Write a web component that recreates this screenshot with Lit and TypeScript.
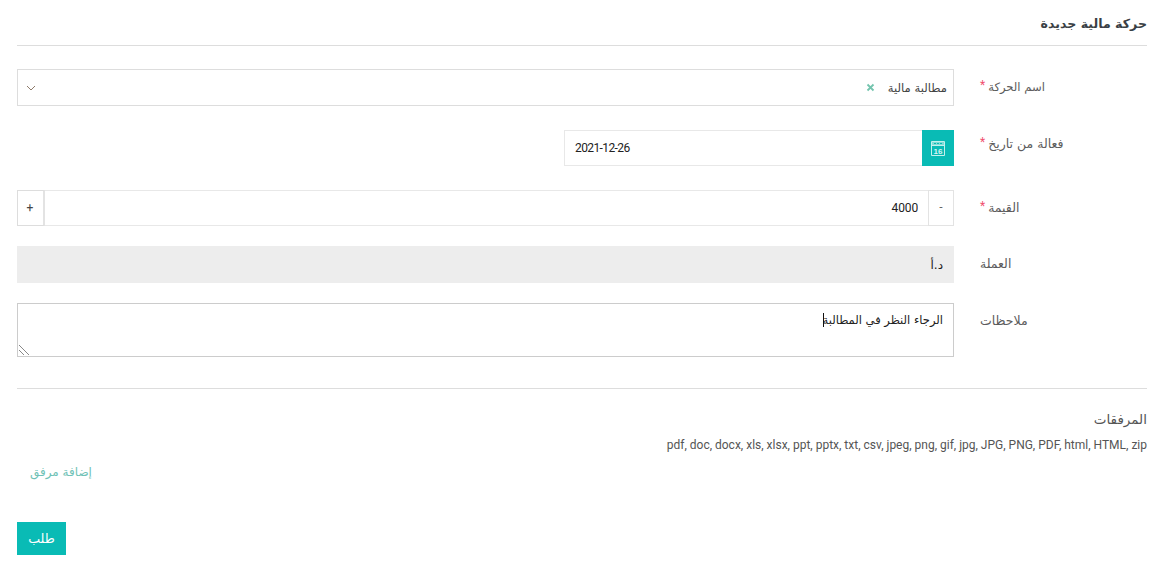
import { LitElement, html, css } from "lit";
import { customElement } from "lit/decorators.js";

@customElement("app-root")
export class AppRoot extends LitElement {
  static styles = css`
    :host {
      display: block;
      box-sizing: border-box;
      width: 1162px;
      height: 567px;
      padding: 0 15px 0 17px;
      background: #fff;
      overflow: hidden;
      font-family: "DejaVu Sans", sans-serif;
      font-size: 12px;
      color: #555;
      direction: rtl;
    }
    * { box-sizing: border-box; }
    .title {
      height: 46px;
      border-bottom: 1px solid #ddd;
      padding-top: 14px;
      font-size: 12.6px;
      line-height: 20px;
      font-weight: 700;
      color: #3a3f45;
    }
    .form { display: flex; flex-direction: column; padding-top: 23px; }
    .row {
      display: grid;
      grid-template-columns: 167px 937px;
      column-gap: 26px;
    }
    .label {
      direction: rtl;
      text-align: left;
      line-height: 20px;
      font-size: 12.5px;
      color: #5c5c5c;
    }
    .label.tight { font-size: 11.6px; }
    .pt-8 { padding-top: 8px; }
    .pt-4 { padding-top: 4px; }
    .label .star {
      color: #f0506e;
      font-family: "Roboto", sans-serif;
      font-size: 12px;
      margin-right: 3px;
      display: inline-block;
      vertical-align: 2px;
      line-height: 10px;
    }
    .m1 { margin-bottom: 24px; }
    .m2 { margin-bottom: 24px; }
    .m3 { margin-bottom: 20px; }
    .m4 { margin-bottom: 20px; }
    .select {
      height: 37px;
      border: 1px solid #ddd;
      display: flex;
      align-items: center;
      padding: 0 6px 0 8px;
      font-size: 11.6px;
      color: #444;
    }
    .select .x { margin-right: 13px; width: 9px; height: 9px; display: block; }
    .select .chev { margin-right: auto; width: 10px; height: 6px; display: block; }
    .date { display: flex; justify-content: flex-start; height: 36px; }
    .cal {
      width: 32px;
      background: #09bbb5;
      display: flex;
      align-items: center;
      justify-content: center;
    }
    .cal svg { width: 14px; height: 15px; display: block; }
    input {
      font: inherit;
      color: #222;
      border: 1px solid #e8e8e8;
      background: #fff;
      outline: none;
      padding: 0;
      margin: 0;
    }
    .date input {
      width: 358px;
      border-right: none;
      font-family: "Roboto", sans-serif;
      letter-spacing: -0.6px;
      direction: ltr;
      text-align: left;
      padding-left: 10px;
    }
    .num { display: flex; height: 36px; }
    .step {
      width: 26px;
      border: 1px solid #e3e3e3;
      display: flex;
      align-items: center;
      justify-content: center;
      font-family: "Roboto", sans-serif;
      font-weight: 300;
      color: #222;
    }
    .step.plus {
      width: 28px;
      border-width: 1px 2px 1px 1px;
      border-color: #ddd #e3e3e3 #ddd #ddd;
      padding-right: 1px;
      font-weight: 400;
      color: #444;
    }
    .num input {
      flex: 1;
      min-width: 0;
      border-width: 1px 0;
      font-family: "Roboto", sans-serif;
      letter-spacing: -0.15px;
      direction: rtl;
      padding-right: 10px;
    }
    .cur {
      height: 37px;
      background: #ededed;
      display: flex;
      align-items: center;
      padding-right: 11px;
      color: #222;
    }
    .note { position: relative; height: 54px; }
    textarea {
      display: block;
      width: 937px;
      height: 54px;
      font: inherit;
      font-size: 11.5px;
      line-height: 20px;
      color: #222;
      border: 1px solid #ccc;
      outline: none;
      padding: 6px 10px;
      margin: 0;
      direction: rtl;
      background: #fff;
      resize: none;
    }
    .caret {
      position: absolute;
      left: 806px;
      top: 10px;
      width: 1px;
      height: 14px;
      background: #111;
    }
    .grip {
      position: absolute;
      left: 1px;
      bottom: 1px;
      width: 12px;
      height: 12px;
      display: block;
    }
    .sep { border: 0; border-top: 1px solid #ddd; margin: 31px 0 0; }
    .att { padding-top: 20px; }
    .att-title { line-height: 20px; font-size: 13.5px; color: #555; }
    .types {
      margin-top: 6px;
      direction: ltr;
      text-align: right;
      font-family: "Roboto", sans-serif;
      font-size: 12px;
      line-height: 20px;
      color: #555;
    }
    .add-wrap { margin-top: 7px; text-align: left; padding-left: 13px; }
    .add { color: #6fc2b6; line-height: 20px; text-decoration: none; }
    .actions { margin-top: 40px; display: flex; justify-content: flex-end; }
    button {
      width: 49px;
      height: 33px;
      background: #09bbb5;
      border: 0;
      color: #fff;
      font: inherit;
      font-size: 12.6px;
      padding: 0;
    }
  `;

  render() {
    return html`
      <div class="title">حركة مالية جديدة</div>
      <div class="form">
        <div class="row m1">
          <div class="label tight pt-8">اسم الحركة<span class="star">*</span></div>
          <div class="select">
            <span>مطالبة مالية</span>
            <svg class="x" viewBox="0 0 9 9"><path d="M1.5 1.5l6 6M7.5 1.5l-6 6" stroke="#74c4ae" stroke-width="1.8" fill="none"/></svg>
            <svg class="chev" viewBox="0 0 10 6"><path d="M1 1l4 4 4-4" stroke="#8f7c6c" stroke-width="1" fill="none"/></svg>
          </div>
        </div>
        <div class="row m2">
          <div class="label pt-4">فعالة من تاريخ<span class="star">*</span></div>
          <div class="date">
            <div class="cal">
              <svg viewBox="0 0 14 15">
                <path d="M.5.5h13v14H.5z" fill="none" stroke="#c4f0ec"/>
                <path d="M1 1h12v3H1z" fill="#7fdcd6"/>
                <path d="M1 4h12v1H1z" fill="#c4f0ec"/>
                <path d="M3 2h2v1H3zM6 2h2v1H6zM9 2h2v1H9z" fill="#09bbb5"/>
                <text x="7" y="12.5" text-anchor="middle" font-size="8" font-weight="700" fill="#d8f6f4" font-family="Liberation Sans">16</text>
              </svg>
            </div>
            <input value="2021-12-26" />
          </div>
        </div>
        <div class="row m3">
          <div class="label pt-8">القيمة<span class="star">*</span></div>
          <div class="num">
            <div class="step">-</div>
            <input value="4000" />
            <div class="step plus">+</div>
          </div>
        </div>
        <div class="row m4">
          <div class="label pt-8">العملة</div>
          <div class="cur">د.أ</div>
        </div>
        <div class="row">
          <div class="label pt-8">ملاحظات</div>
          <div class="note">
            <textarea>الرجاء النظر في المطالبة</textarea>
            <span class="caret"></span>
            <svg class="grip" viewBox="0 0 12 12">
              <path d="M1 1l10 10M1 6l5 5" stroke="#555" stroke-width="1" stroke-dasharray="1 .41" fill="none"/>
            </svg>
          </div>
        </div>
      </div>
      <hr class="sep" />
      <div class="att">
        <div class="att-title">المرفقات</div>
        <div class="types">pdf, doc, docx, xls, xlsx, ppt, pptx, txt, csv, jpeg, png, gif, jpg, JPG, PNG, PDF, html, HTML, zip</div>
        <div class="add-wrap"><a class="add">إضافة مرفق</a></div>
      </div>
      <div class="actions"><button>طلب</button></div>
    `;
  }
}
